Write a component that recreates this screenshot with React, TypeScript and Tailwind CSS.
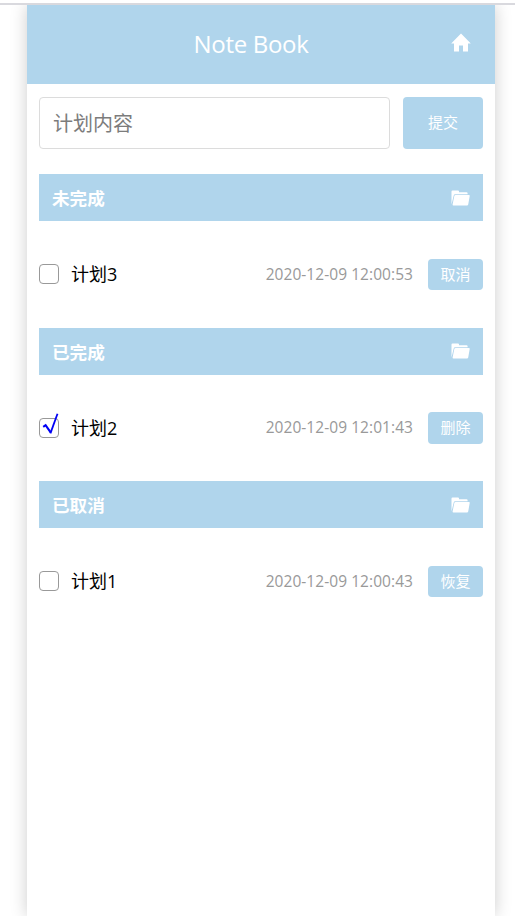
import React, { useState } from "react";

type Section = {
  title: string;
  plan: string;
  time: string;
  action: string;
  done: boolean;
};

const sections: Section[] = [
  { title: "未完成", plan: "计划3", time: "2020-12-09 12:00:53", action: "取消", done: false },
  { title: "已完成", plan: "计划2", time: "2020-12-09 12:01:43", action: "删除", done: true },
  { title: "已取消", plan: "计划1", time: "2020-12-09 12:00:43", action: "恢复", done: false },
];

function HomeIcon() {
  return (
    <svg width="20" height="19" viewBox="0 0 20 19" fill="#fff">
      <path d="M10 0.6 L19.8 10.6 H17 V18.5 H12 V12.6 H8 V18.5 H3 V10.6 H0.2 Z" />
    </svg>
  );
}

function FolderIcon() {
  return (
    <svg width="19" height="16" viewBox="0 0 19 16" fill="#fff">
      <path d="M0.5 14.6 V1.4 Q0.5 0.4 1.5 0.4 H7 Q8 0.4 8 1.4 V2.2 H15.6 Q16.6 2.2 16.6 3.2 V4.3 H4.2 Q3 4.3 2.7 5.4 Z" />
      <path d="M4.6 5 H18 Q18.9 5 18.7 6 L17.2 14.6 Q17 15.5 16 15.5 H2.4 Q1.4 15.5 1.6 14.5 L3.3 6 Q3.5 5 4.6 5 Z" />
    </svg>
  );
}

function Checkbox({ checked }: { checked: boolean }) {
  return (
    <span className="relative block h-5 w-5 shrink-0 rounded-[4px] border border-[#999]">
      {checked && (
        <svg className="absolute -top-[6px] left-[2px]" width="18" height="24" viewBox="0 0 18 24" fill="none" stroke="#0000f5">
          <path d="M1.2 13.8 L3.6 12.2 L8.8 19.6" strokeWidth="2.1" />
          <path d="M8.4 20.4 L15.5 0.8" strokeWidth="1.8" />
        </svg>
      )}
    </span>
  );
}

export default function App() {
  const [text, setText] = useState("");
  return (
    <div className="h-[916px] overflow-hidden bg-white pt-[3px] font-['Open_Sans','Noto_Sans_CJK_SC',sans-serif]">
      <div className="h-[2px] bg-[#d9d9de]" />
      <div className="h-[911px] overflow-hidden">
        <main className="ml-[27px] h-[911px] w-[468px] bg-white shadow-[0_0_16px_rgba(0,0,0,0.2)]">
          <header className="flex h-[79px] items-center bg-[#b0d5ec] pr-6 pl-[13px] text-white">
            <h1 className="flex-1 pb-[2px] pl-[11px] text-center text-[24px] leading-8 tracking-[-0.3px]">Note Book</h1>
            <span className="mb-[5px]"><HomeIcon /></span>
          </header>
          <div className="px-3 pt-[13px]">
            <div className="flex h-[52px] gap-[13px]">
              <input
                value={text}
                onChange={(e) => setText(e.target.value)}
                placeholder="计划内容"
                className="w-[351px] rounded-[4px] border border-[#dcdcdc] px-[13px] pt-[2px] text-[20px] outline-none placeholder:text-[#7c7c7c]"
              />
              <button className="w-20 rounded-[4px] bg-[#b0d5ec] pb-[2px] text-[15px] text-white">提交</button>
            </div>
            <div className="pt-[25px]">
              {sections.map((s) => (
                <section key={s.title} className="h-[153.5px]">
                  <div className="flex h-[47px] items-center justify-between bg-[#b0d5ec] pr-[13px] pl-[13px] text-white">
                    <h2 className="pt-[2px] text-[17.6px] font-bold">{s.title}</h2>
                    <FolderIcon />
                  </div>
                  <div className="mt-[37.9px] flex h-[31.4px] items-center">
                    <span className="pb-px"><Checkbox checked={s.done} /></span>
                    <span className="ml-3 flex-1 text-[18px] text-black">{s.plan}</span>
                    <time className="mr-[15px] text-[15.5px] tracking-[0.06px] text-[#999]">{s.time}</time>
                    <button className="h-[31.4px] w-[55px] rounded-[4px] bg-[#b0d5ec] pb-px text-[15px] text-white">{s.action}</button>
                  </div>
                </section>
              ))}
            </div>
          </div>
        </main>
      </div>
    </div>
  );
}
